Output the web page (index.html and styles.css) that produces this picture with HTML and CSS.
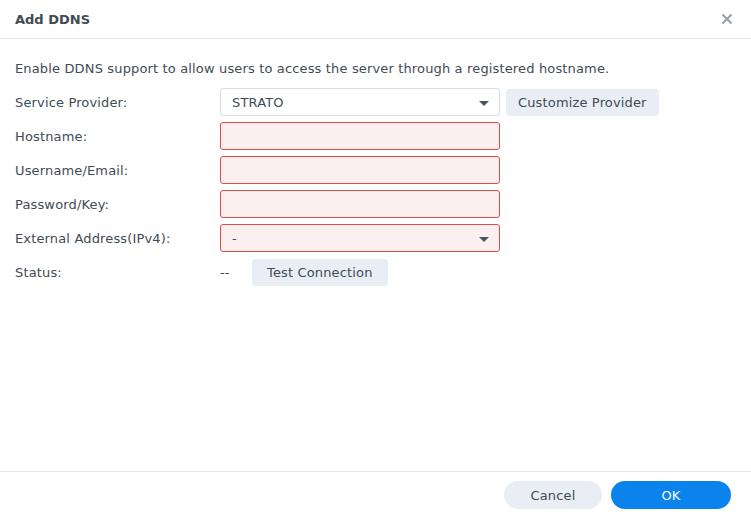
FILE: index.html
```html
<!DOCTYPE html>
<html>
<head>
<meta charset="utf-8">
<link rel="stylesheet" href="styles.css">
</head>
<body>
<div class="dialog">
  <div class="header">
    <span class="title">Add DDNS</span>
    <span class="close"><svg width="12" height="12" viewBox="0 0 12 12"><path d="M1.5 1.5 L10.5 10.5 M10.5 1.5 L1.5 10.5" stroke="#9aa1a9" stroke-width="2.2" stroke-linecap="butt"/></svg></span>
  </div>
  <div class="body">
    <p class="desc">Enable DDNS support to allow users to access the server through a registered hostname.</p>
    <div class="form">
      <div class="row">
        <span class="label">Service Provider:</span>
        <div class="field select">STRATO<span class="arrow"></span></div>
        <button class="btn">Customize Provider</button>
      </div>
      <div class="row">
        <span class="label">Hostname:</span>
        <div class="field invalid"></div>
      </div>
      <div class="row">
        <span class="label">Username/Email:</span>
        <div class="field invalid"></div>
      </div>
      <div class="row">
        <span class="label">Password/Key:</span>
        <div class="field invalid"></div>
      </div>
      <div class="row">
        <span class="label">External Address(IPv4):</span>
        <div class="field select invalid">-<span class="arrow"></span></div>
      </div>
      <div class="row status">
        <span class="label">Status:</span>
        <span class="value">--</span>
        <button class="btn">Test Connection</button>
      </div>
    </div>
  </div>
  <div class="footer">
    <button class="pill cancel">Cancel</button>
    <button class="pill ok">OK</button>
  </div>
</div>
</body>
</html>
```
FILE: styles.css
```css
html, body {
  margin: 0;
  padding: 0;
  background: #ffffff;
}
body {
  font-family: "DejaVu Sans", Verdana, sans-serif;
  font-size: 13px;
  letter-spacing: 0.15px;
  color: #414b55;
}
.dialog {
  width: 751px;
  height: 518px;
  display: flex;
  flex-direction: column;
  box-sizing: border-box;
}
.header {
  height: 38px;
  border-bottom: 1px solid #e3e8ee;
  display: flex;
  align-items: center;
  justify-content: space-between;
  padding: 0 18px 0 15px;
  box-sizing: content-box;
}
.title {
  font-weight: bold;
  font-size: 13px;
  letter-spacing: 0;
  color: #414b55;
}
.close {
  display: flex;
  width: 12px;
  height: 12px;
}
.body {
  flex: 1;
  padding: 0 15px;
}
.desc {
  margin: 22px 0 11px 0;
  line-height: 16px;
}
.form {
  display: flex;
  flex-direction: column;
  gap: 6px;
}
.row {
  display: flex;
  align-items: center;
  height: 28px;
}
.label {
  width: 205px;
  flex: none;
}
.field {
  width: 280px;
  height: 28px;
  box-sizing: border-box;
  border: 1px solid #d3dde7;
  border-radius: 3px;
  background: #fff;
  padding: 0 11px;
  display: flex;
  align-items: center;
  position: relative;
}
.field.invalid {
  border-color: #e84a4a;
  background: #fcefef;
}
.arrow {
  position: absolute;
  right: 10px;
  top: 12px;
  width: 0;
  height: 0;
  border-left: 5px solid transparent;
  border-right: 5px solid transparent;
  border-top: 5px solid #4b5563;
}
.btn {
  font-family: inherit;
  font-size: 13px;
  letter-spacing: 0.15px;
  color: #414b55;
  background: #e9eef5;
  border: none;
  border-radius: 3px;
  height: 27px;
  padding: 0 12px;
  margin-left: 6px;
}
.status .value {
  width: 32px;
  flex: none;
}
.status .btn {
  margin-left: 0;
  padding: 0 15px;
}
.footer {
  height: 46px;
  border-top: 1px solid #e3e8ee;
  display: flex;
  justify-content: flex-end;
  align-items: center;
  gap: 9px;
  padding: 0 20px 0 0;
  flex: none;
}
.pill {
  font-family: inherit;
  font-size: 13px;
  letter-spacing: 0.15px;
  height: 28px;
  border: none;
  border-radius: 14px;
}
.cancel {
  width: 98px;
  background: #e9eef5;
  color: #414b55;
}
.ok {
  width: 120px;
  background: #0a84ec;
  color: #ffffff;
}
```
